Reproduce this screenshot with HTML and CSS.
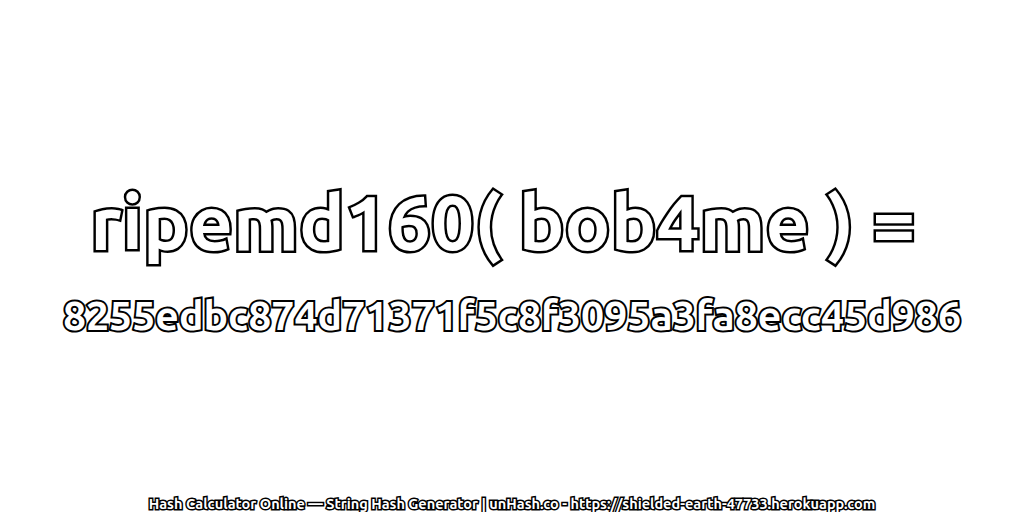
FILE: index.html
```html
<!DOCTYPE html>
<html lang="en">
<head>
  <meta charset="UTF-8" />
  <title>ripemd160( bob4me )</title>
  <link rel="stylesheet" href="styles.css">
</head>
<body>
  <div class="page">
    <main class="result">
      <div class="line-big">ripemd160( bob4me ) = </div>
      <div class="line-hash">8255edbc874d71371f5c8f3095a3fa8ecc45d986</div>
    </main>
    <footer class="credit">Hash Calculator Online — String Hash Generator | unHash.co - https://shielded-earth-47733.herokuapp.com</footer>
  </div>
</body>
</html>
```

FILE: styles.css
```css
* {
  box-sizing: border-box;
}

body {
  margin: 0;
  background: #fff;
  font-family: "Ubuntu", "Noto Sans", sans-serif;
}

.page {
  width: 1024px;
  height: 512px;
  display: flex;
  flex-direction: column;
  align-items: center;
  overflow: hidden;
}

.result {
  flex: 1;
  display: flex;
  flex-direction: column;
  align-items: center;
  padding-top: 176px;
}

.line-big,
.line-hash,
.credit {
  color: #fff;
  font-weight: 700;
  white-space: pre;
  -webkit-text-stroke-color: #000;
  paint-order: stroke fill;
}

.line-big {
  font-size: 76.5px;
  line-height: 92px;
  -webkit-text-stroke-width: 5px;
}

.line-hash {
  font-size: 41px;
  line-height: 46px;
  margin-top: 24px;
  -webkit-text-stroke-width: 4px;
}

.credit {
  font-size: 14.5px;
  line-height: 16px;
  -webkit-text-stroke-width: 3px;
}
```
